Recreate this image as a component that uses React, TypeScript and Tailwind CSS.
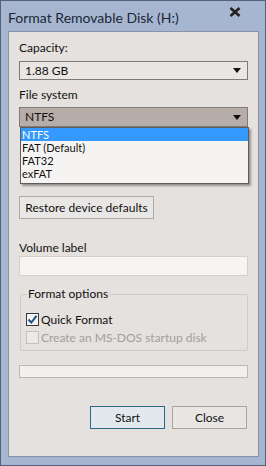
const font = { fontFamily: 'Lato, "Noto Sans", sans-serif' };

function Caret() {
  return (
    <svg width="8" height="5" viewBox="0 0 8 5" className="shrink-0">
      <path d="M0 0 H8 L4 5 Z" fill="#111" />
    </svg>
  );
}

function Select({ value, open }: { value: string; open?: boolean }) {
  return (
    <div
      className={`flex items-center justify-between pl-[5px] pr-[6px] border border-[#7d7a77] text-[12px] leading-none ${
        open ? 'h-[20px] bg-[#b6aca8]' : 'h-[19px] bg-[#e9e6e3]'
      }`}
    >
      <span className="text-[#111]">{value}</span>
      <Caret />
    </div>
  );
}

function Check({ checked, disabled, label }: { checked?: boolean; disabled?: boolean; label: string }) {
  return (
    <div className="flex items-center gap-[2px] h-[13px]">
      <div
        className={`w-[13px] h-[13px] border flex items-center justify-center ${
          disabled ? 'border-[#c3c0bd] bg-[#eceae8]' : 'border-[#3a3a3a] bg-[#f4f4f4]'
        }`}
      >
        {checked && (
          <svg width="11" height="11" viewBox="0 0 11 11">
            <path d="M1.5 5.5 L4.3 8.5 L9.5 1.8" stroke="#1c4f86" strokeWidth="2" fill="none" />
          </svg>
        )}
      </div>
      <span className={`text-[12px] leading-none ${disabled ? 'text-[#a29f9c]' : 'text-[#111]'}`}>{label}</span>
    </div>
  );
}

export default function App() {
  return (
    <div className="w-[266px] h-[466px] bg-[#a6b6d1] border border-[#56607a] flex flex-col" style={font}>
      {/* title bar */}
      <div className="h-[30px] flex items-center justify-between pl-[7px] pr-[24px]">
        <span className="text-[14px] text-[#1c2636] mt-[3px]">Format Removable Disk (H:)</span>
        <svg width="12" height="10" viewBox="0 0 12 10" className="mb-[8px]">
          <path d="M1.5 1 L10.5 9 M10.5 1 L1.5 9" stroke="#222" strokeWidth="2.6" />
        </svg>
      </div>

      {/* client area */}
      <div className="relative ml-[7px] mr-[6px] h-[426px] bg-[#e4e1de] border border-[#8a93a6] flex flex-col px-[10px] text-[12px] text-[#111]">
        <div className="mt-[8px] h-[15px] leading-[15px]">Capacity:</div>
        <div className="mt-[6px]">
          <Select value="1.88 GB" />
        </div>
        <div className="mt-[7px] h-[15px] leading-[15px]">File system</div>
        <div className="mt-[5px]">
          <Select value="NTFS" open />
        </div>

        {/* open dropdown list */}
        <div className="absolute left-[11px] top-[95px] w-[229px] h-[57px] bg-[#f6f4f2] border border-[#5f5c5a] shadow-[2px_2px_2px_rgba(0,0,0,0.35)] flex flex-col text-[11px] leading-[13px]">
          <div className="h-[13px] bg-[#3399ff] text-white pl-[1px]">NTFS</div>
          <div className="h-[13px] pl-[1px]">FAT (Default)</div>
          <div className="h-[13px] pl-[1px]">FAT32</div>
          <div className="h-[13px] pl-[1px]">exFAT</div>
        </div>

        <div className="mt-[69px]">
          <button className="h-[23px] w-[135px] border border-[#adaaa7] bg-[#e9e7e5] text-[12px] text-[#111]">
            Restore device defaults
          </button>
        </div>

        <div className="mt-[21px] h-[15px] leading-[15px]">Volume label</div>
        <div className="mt-[1px] h-[20px] bg-[#f6f5f3] border border-[#d3d0cc]" />

        {/* group box */}
        <div className="relative mt-[18px] ml-[1px] h-[57px] border border-[#cfccc8] rounded-[2px] flex flex-col pl-[5px] pt-[18px] gap-[5px]">
          <span className="absolute -top-[9px] left-[6px] px-[1px] bg-[#e4e1de] leading-[15px]">Format options</span>
          <Check checked label="Quick Format" />
          <Check disabled label="Create an MS-DOS startup disk" />
        </div>

        <div className="mt-[14px] h-[13px] bg-[#f1f0ee] border border-[#bcbab6]" />

        <div className="mt-[28px] flex justify-end gap-[7px] pr-[1px]">
          <button className="h-[23px] w-[75px] border border-[#2f6983] bg-[#e3e8ee] text-[12px] text-[#111]">Start</button>
          <button className="h-[23px] w-[75px] border border-[#a7a4a1] bg-[#e8e6e4] text-[12px] text-[#111]">Close</button>
        </div>
      </div>
    </div>
  );
}
